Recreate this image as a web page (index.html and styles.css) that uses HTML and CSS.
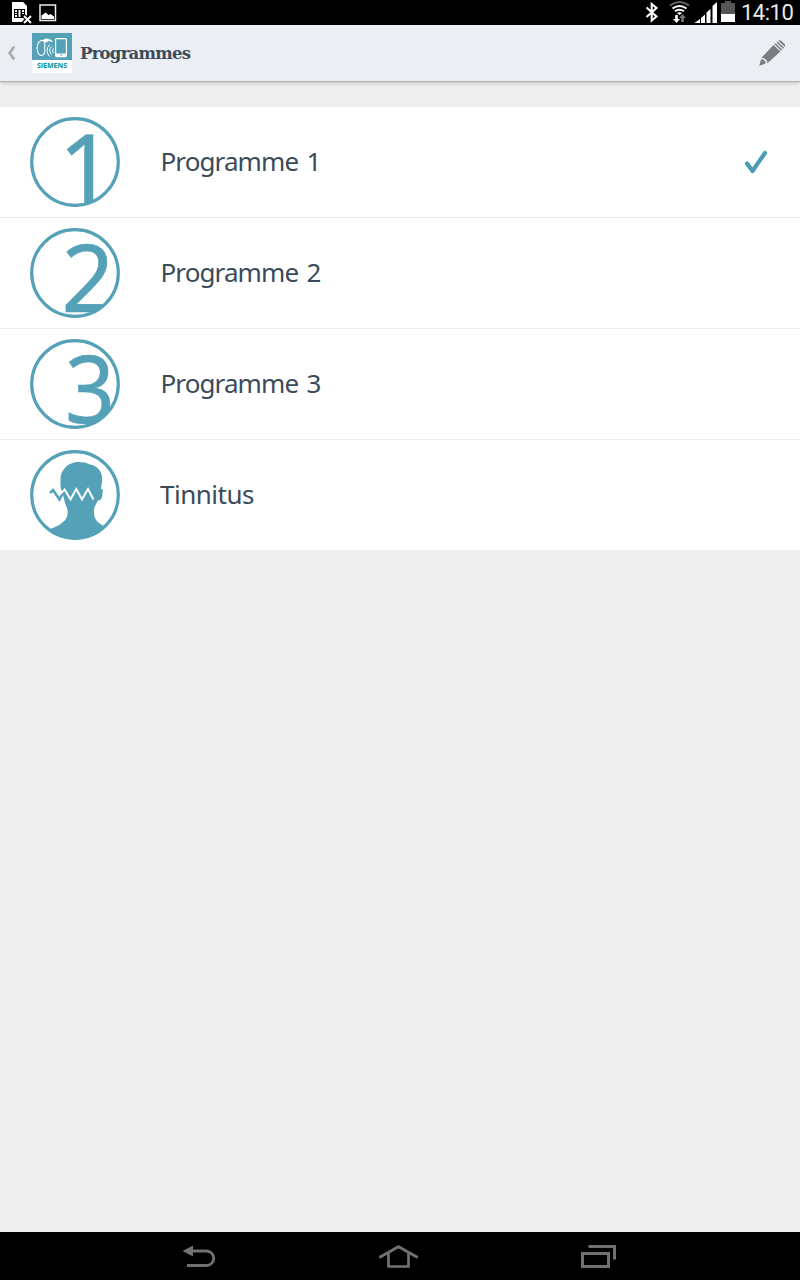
FILE: index.html
```html
<!DOCTYPE html>
<html lang="en">
<head>
    <meta charset="UTF-8">
    <meta name="viewport" content="width=device-width, initial-scale=1.0">
    <title>Programmes</title>
    <link rel="stylesheet" href="styles.css">
</head>
<body>
    <div class="status-bar">
        <svg class="status-left" width="60" height="25" viewBox="0 0 60 25">
            <path d="M12 2h11l4 4v16H12z" fill="#fff"/>
            <path d="M14 9h11v9H14z" fill="#000"/>
            <path d="M15 10h2v2h-2zM15 13h2v1h-2zM15 15h2v2h-2zM18.500 10h2v7h-2zM22 10h2v2h-2zM22 13h2v1h-2z" fill="#fff"/>
            <path d="M23.500 15.500l8 7.500M31.500 15.500l-8 7.500" stroke="#000" stroke-width="4"/>
            <path d="M24 16l7 7M31 16l-7 7" stroke="#fff" stroke-width="1.900"/>
            <rect x="40" y="5" width="15.500" height="15.500" fill="none" stroke="#eee" stroke-width="1.500"/>
            <path d="M41.500 19v-3.500l4-3 3 2.500 2-1 3.500 2.500V19z" fill="#fff"/>
        </svg>
        <svg class="status-right" width="98" height="25" viewBox="640 0 98 25">
            <path d="M646.500 7.500l10 9-4.800 4V4l4.800 4-10 9" fill="none" stroke="#fff" stroke-width="2.100"/>
            <path d="M670 5.500q9.500-7 19 0" fill="none" stroke="#666" stroke-width="2"/>
            <path d="M672.500 8.500q7-5 14 0M675 11.200q4.500-3 9 0" fill="none" stroke="#fff" stroke-width="2"/>
            <path d="M676.800 13q2.700-1.500 5.400 0l-2.700 2z" fill="#fff"/>
            <path d="M675.200 15h2.600v4h2.200l-3.500 4-3.500-4h2.200z" fill="#fff"/>
            <path d="M681.200 22h2.600v-4h2.200l-3.500-4-3.500 4h2.200z" fill="#777"/>
            <path d="M694.500 23l5.500-4v4zM701 18l4-3.500V23h-4zM706.500 12.500l4-3.500v14h-4zM712.500 6l4.500-4v21h-4.500z" fill="#fff"/>
            <path d="M721 3h4V1h6v2h4v11h-14z" fill="#555"/>
            <path d="M721 14h14v8h-14z" fill="#fff"/>
        </svg>
        <span class="clock">14:10</span>
    </div>

    <header class="action-bar">
        <svg class="back" width="32" height="40" viewBox="0 0 32 40">
            <path d="M14.200 13.500L9.700 20l4.500 6.500" fill="none" stroke="#a9adb0" stroke-width="2.700"/>
        </svg>
        <div class="app-logo">
            <svg width="40" height="27" viewBox="0 0 40 27" fill="none" stroke="#fff">
                <path d="M9 7.500C5.500 9 4.500 14 5.500 18c1 5 5.500 6 7 2 1-3-.5-4.500.3-8C13.500 8.500 11 7 9 7.500z" stroke-width="1.100"/>
                <path d="M11 8c0-3 6-4 10 .5l-2 .5c-2-1.500-3-1-4 .5z" fill="#fff" stroke="none"/>
                <path d="M21.500 15.500q-2 2 0 4.500M19.500 13.500q-3.500 3.500 0 8M17.500 11.500q-5 6 0 12" stroke-width="1"/>
                <rect x="23.600" y="5.600" width="10.800" height="18" rx="1" stroke-width="1.200"/>
                <path d="M24 20.500h10v3H24z" fill="#fff" stroke="none"/>
                <path d="M28 22h2.500" stroke="#54a1b8"/>
            </svg>
            <span class="brand">SIEMENS</span>
        </div>
        <h1>Programmes</h1>
        <svg class="edit" width="26" height="26" viewBox="0 0 26 26" fill="#7b7d7f">
            <path d="M.3 25.700l1.800-6.500 2.200.3 2 1.800.3 2.300z"/>
            <path d="M2.500 17.700L14.500 5l6.800 6.500L8.500 23.300l-.7-2.800-2.700-2.200z"/>
            <path d="M15.400 4.200l6.700 6.500 1.200-1-6.700-6.500zM17.500 2.400l6.600 6.400 1-1-6.600-6.400zM19.500.8l6.200 6c.7-1 .6-2-.2-2.900L22.500 1c-.8-.8-2-.9-3-.2z"/>
        </svg>
    </header>

    <main class="programmes">
        <div class="row">
            <svg class="icon" width="90" height="90" viewBox="0 0 90 90">
                <clipPath id="disc"><circle cx="45" cy="45" r="44"/></clipPath>
                <g clip-path="url(#disc)">
                    <text class="digit one" x="28.500" y="87">1</text>
                </g>
                <circle class="ring" cx="45" cy="45" r="43.300"/>
            </svg>
            <span class="label">Programme <span class="num">1</span></span>
            <svg class="check" width="26" height="26" viewBox="0 0 26 26">
                <path d="M3 14.500l5.500 7.500L21 4" fill="none" stroke="#4c9cb8" stroke-width="4.200" stroke-linecap="round" stroke-linejoin="round"/>
            </svg>
        </div>
        <div class="row">
            <svg class="icon" width="90" height="90" viewBox="0 0 90 90">
                <g clip-path="url(#disc)">
                    <text class="digit" x="31.500" y="83.500" textLength="53" lengthAdjust="spacingAndGlyphs">2</text>
                </g>
                <circle class="ring" cx="45" cy="45" r="43.300"/>
            </svg>
            <span class="label">Programme <span class="num">2</span></span>
        </div>
        <div class="row">
            <svg class="icon" width="90" height="90" viewBox="0 0 90 90">
                <g clip-path="url(#disc)">
                    <text class="digit" x="35" y="83.500" textLength="50" lengthAdjust="spacingAndGlyphs">3</text>
                </g>
                <circle class="ring" cx="45" cy="45" r="43.300"/>
            </svg>
            <span class="label">Programme <span class="num">3</span></span>
        </div>
        <div class="row">
            <svg class="icon" width="90" height="90" viewBox="0 0 90 90">
                <path clip-path="url(#disc)" fill="#54a1b8" d="M30.500 36V28C31 21 36 14 46 12c4-.5 6 1 9 .5l5 2c7 1 11 6 12 12 .5 4-.7 8-1 13 1.500-1 2 0 1.700 2-.2 3-.7 8-2.700 8.500-2 0-2.500 1-3.500 3C65 56 63.500 59 64 63c0 8 6 11 13 15L72 92H20L17 80c6-2 12-4 16-8 4-3 5-7 4.500-12-.5-3-2-5-3-9-.5-5-3.500-9-4-15z"/>
                <path d="M20 43l3-3 6.500 9.500 4-8" fill="none" stroke="#54a1b8" stroke-width="2.500"/>
                <path d="M29.500 44.500L34.700 39.500l5.800 10L46.300 39 52 49.500 58 39l5.500 10.500" fill="none" stroke="#fff" stroke-width="2"/>
                <circle class="ring" cx="45" cy="45" r="43.300"/>
            </svg>
            <span class="label tinnitus">Tinnitus</span>
        </div>
    </main>

    <nav class="nav-bar">
        <svg width="34" height="24" viewBox="0 0 34 24">
            <path d="M9 7h15.500a7 7 0 0 1 0 14.500H5" fill="none" stroke="#717171" stroke-width="2.800"/>
            <path d="M.5 7L11 1.500v11z" fill="#717171"/>
        </svg>
        <svg width="40" height="24" viewBox="0 0 40 24" fill="none" stroke="#717171">
            <path d="M.3 13.500L19.500 2.700 38.700 13.500" stroke-width="2.900"/>
            <path d="M9.500 9v13.500h20V9" stroke-width="2.700"/>
        </svg>
        <svg width="36" height="24" viewBox="0 0 36 24" fill="none" stroke="#717171" stroke-width="3">
            <path d="M1.500 9.500h26v13h-26zM7.500 2.500h26V15.500"/>
        </svg>
    </nav>
</body>
</html>
```
FILE: styles.css
```css
body {
    display: flex;
    flex-direction: column;
    height: 1280px;
    margin: 0;
    background-color: #eee;
    font-family: "Noto Sans", sans-serif;
    overflow: hidden;
}
svg {
    display: block;
    flex: none;
}
.status-bar {
    display: flex;
    height: 25px;
    background-color: #000;
}
.status-right {
    margin-left: auto;
}
.clock {
    width: 59px;
    margin-left: 3px;
    color: #e8e8e8;
    font: 22px/25px Roboto, sans-serif;
    letter-spacing: -0.5px;
    white-space: nowrap;
}
.action-bar {
    display: flex;
    align-items: center;
    box-sizing: border-box;
    height: 57px;
    background-color: #ebeff3;
    border-bottom: 1px solid #aeb0b2;
    box-shadow: 0 1px 4px rgba(0, 0, 0, 0.2);
}
.app-logo {
    width: 40px;
    height: 40px;
    background-color: #fff;
}
.app-logo svg {
    background-color: #54a1b8;
}
.brand {
    display: block;
    color: #009090;
    font: bold 7px/11px "Open Sans", sans-serif;
    text-align: center;
}
h1 {
    margin: 2px 0 0 8px;
    color: #3b4b5b;
    font: bold 16.5px/40px "DejaVu Serif", serif;
    letter-spacing: -0.75px;
}
.edit {
    margin: 0 15px 0 auto;
}
.programmes {
    margin-top: 25px;
    background-color: #fff;
}
.row {
    display: flex;
    align-items: center;
    box-sizing: border-box;
    height: 111px;
    padding: 0 30px;
    border-bottom: 1px solid #ececec;
}
.row:last-child {
    height: 110px;
    border-bottom: none;
}
.label {
    margin: -2px 0 0 40.5px;
    color: #3b4b5b;
    font-size: 26px;
    line-height: 36px;
    letter-spacing: -0.9px;
}
.num {
    margin-left: 2.5px;
}
.tinnitus {
    margin-left: 40px;
    letter-spacing: -0.5px;
}
.check {
    margin-left: auto;
}
.ring {
    fill: none;
    stroke: #54a1b8;
    stroke-width: 3.2;
}
.digit {
    fill: #54a1b8;
    stroke: #54a1b8;
    stroke-width: 0.6;
    font-size: 93px;
}
.one {
    font-size: 97px;
}
.nav-bar {
    display: flex;
    align-items: center;
    justify-content: space-between;
    height: 48px;
    margin-top: auto;
    padding: 0 183px 0 182px;
    background-color: #000;
}
```
